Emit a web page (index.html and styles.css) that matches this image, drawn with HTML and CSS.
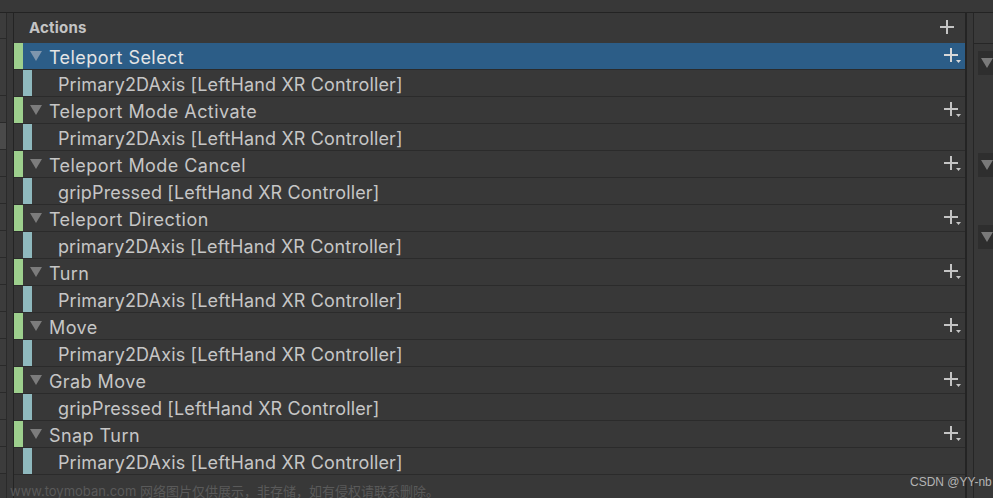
FILE: index.html
```html
<!DOCTYPE html>
<html>
<head>
<meta charset="utf-8">
<link rel="stylesheet" href="styles.css">
</head>
<body>
<div class="topstrip"></div>
<div class="window">
  <div class="leftstrip">
    <div class="lcol">
      <div class="lcell" style="height:26px"></div>
      <div class="lcell" style="height:57px"></div>
      <div class="lcell" style="height:27px"></div>
      <div class="lcell lighter" style="height:27px"></div>
      <div class="lcell" style="height:27px"></div>
      <div class="lcell" style="height:27px"></div>
      <div class="lcell" style="height:27px"></div>
      <div class="lcell" style="height:27px"></div>
      <div class="lcell" style="height:27px"></div>
      <div class="lcell" style="height:27px"></div>
      <div class="lcell" style="height:27px"></div>
      <div class="lcell" style="height:27px"></div>
      <div class="lcell" style="height:27px"></div>
      <div class="lcell" style="height:27px"></div>
      <div class="lcell" style="height:27px"></div>
      <div class="lcell" style="height:27px"></div>
    </div>
  </div>
  <div class="panel">
    <div class="header">
      <span class="title">Actions</span>
      <svg class="plus" width="14" height="14" viewBox="0 0 14 14"><path d="M7 0v14M0 7h14" stroke="#c4c4c4" stroke-width="2"/></svg>
    </div>
    <div class="list">
      <div class="row action selected"><span class="gbar"></span><span class="tri"></span><span class="name">Teleport Select</span><span class="addbtn"><svg width="18" height="16" viewBox="0 0 18 16"><path d="M7 0v14M0 7h14" stroke="#d8d8d8" stroke-width="2"/><path d="M12 12h5l-2.5 3z" fill="#d8d8d8"/></svg></span></div>
      <div class="row binding"><span class="tbar"></span><span class="bname">Primary2DAxis [LeftHand XR Controller]</span></div>
      <div class="row action"><span class="gbar"></span><span class="tri"></span><span class="name">Teleport Mode Activate</span><span class="addbtn"><svg width="18" height="16" viewBox="0 0 18 16"><path d="M7 0v14M0 7h14" stroke="#c4c4c4" stroke-width="2"/><path d="M12 12h5l-2.5 3z" fill="#c4c4c4"/></svg></span></div>
      <div class="row binding"><span class="tbar"></span><span class="bname">Primary2DAxis [LeftHand XR Controller]</span></div>
      <div class="row action"><span class="gbar"></span><span class="tri"></span><span class="name">Teleport Mode Cancel</span><span class="addbtn"><svg width="18" height="16" viewBox="0 0 18 16"><path d="M7 0v14M0 7h14" stroke="#c4c4c4" stroke-width="2"/><path d="M12 12h5l-2.5 3z" fill="#c4c4c4"/></svg></span></div>
      <div class="row binding"><span class="tbar"></span><span class="bname">gripPressed [LeftHand XR Controller]</span></div>
      <div class="row action"><span class="gbar"></span><span class="tri"></span><span class="name">Teleport Direction</span><span class="addbtn"><svg width="18" height="16" viewBox="0 0 18 16"><path d="M7 0v14M0 7h14" stroke="#c4c4c4" stroke-width="2"/><path d="M12 12h5l-2.5 3z" fill="#c4c4c4"/></svg></span></div>
      <div class="row binding"><span class="tbar"></span><span class="bname">primary2DAxis [LeftHand XR Controller]</span></div>
      <div class="row action"><span class="gbar"></span><span class="tri"></span><span class="name">Turn</span><span class="addbtn"><svg width="18" height="16" viewBox="0 0 18 16"><path d="M7 0v14M0 7h14" stroke="#c4c4c4" stroke-width="2"/><path d="M12 12h5l-2.5 3z" fill="#c4c4c4"/></svg></span></div>
      <div class="row binding"><span class="tbar"></span><span class="bname">Primary2DAxis [LeftHand XR Controller]</span></div>
      <div class="row action"><span class="gbar"></span><span class="tri"></span><span class="name">Move</span><span class="addbtn"><svg width="18" height="16" viewBox="0 0 18 16"><path d="M7 0v14M0 7h14" stroke="#c4c4c4" stroke-width="2"/><path d="M12 12h5l-2.5 3z" fill="#c4c4c4"/></svg></span></div>
      <div class="row binding"><span class="tbar"></span><span class="bname">Primary2DAxis [LeftHand XR Controller]</span></div>
      <div class="row action"><span class="gbar"></span><span class="tri"></span><span class="name">Grab Move</span><span class="addbtn"><svg width="18" height="16" viewBox="0 0 18 16"><path d="M7 0v14M0 7h14" stroke="#c4c4c4" stroke-width="2"/><path d="M12 12h5l-2.5 3z" fill="#c4c4c4"/></svg></span></div>
      <div class="row binding"><span class="tbar"></span><span class="bname">gripPressed [LeftHand XR Controller]</span></div>
      <div class="row action"><span class="gbar"></span><span class="tri"></span><span class="name">Snap Turn</span><span class="addbtn"><svg width="18" height="16" viewBox="0 0 18 16"><path d="M7 0v14M0 7h14" stroke="#c4c4c4" stroke-width="2"/><path d="M12 12h5l-2.5 3z" fill="#c4c4c4"/></svg></span></div>
      <div class="row binding"><span class="tbar"></span><span class="bname">Primary2DAxis [LeftHand XR Controller]</span></div>
    </div>
  </div>
  <div class="rightstrip">
    <div class="rtop"></div>
    <div class="rbox" style="margin-top:7px"><span class="rtri"></span></div>
    <div class="rbox" style="margin-top:78px"><span class="rtri"></span></div>
    <div class="rbox" style="margin-top:48px"><span class="rtri"></span></div>
  </div>
</div>
<div class="watermark">www.toymoban.com 网络图片仅供展示，非存储，如有侵权请联系删除。</div>
<div class="csdn">CSDN @YY-nb</div>
</body>
</html>
```
FILE: styles.css
```css
html, body {
  margin: 0;
  padding: 0;
  background: #383838;
  width: 993px;
  height: 498px;
  overflow: hidden;
  font-family: Inter, "Noto Sans", "Noto Sans CJK SC", sans-serif;
  color: #c4c4c4;
}

body { position: relative; }

.topstrip {
  height: 12px;
  background: #383838;
  border-bottom: 1px solid #232323;
}

.window {
  display: flex;
  height: 485px;
}

.leftstrip {
  width: 13px;
  display: flex;
}

.lcol {
  width: 6px;
  border-right: 1px solid #2a2a2a;
  display: flex;
  flex-direction: column;
}

.lcell {
  border-bottom: 1px solid #2a2a2a;
  background: #3c3c3c;
  box-sizing: border-box;
  flex-shrink: 0;
}

.lcell.lighter { background: #4a4a4a; }

.panel {
  width: 955px;
  border-left: 1px solid #242424;
  border-right: 2px solid #242424;
  background: #383838;
  display: flex;
  flex-direction: column;
}

.header {
  height: 30px;
  display: flex;
  align-items: center;
  justify-content: space-between;
  padding: 0 10px 0 15px;
}

.title {
  font-size: 15px;
  font-weight: 700;
  color: #c4c4c4;
  letter-spacing: 0.2px;
  margin-top: -1px;
}

.plus { margin-top: -3px; margin-right: 1px; }

.row {
  height: 26px;
  border-bottom: 1px solid #2b2b2b;
  display: flex;
  align-items: center;
  background: #383838;
}

.row.selected { background: #2c5d87; }

.gbar {
  width: 9px;
  height: 100%;
  background: #9dcf8d;
  flex-shrink: 0;
}

.tbar {
  width: 9px;
  height: 100%;
  background: #8fb9be;
  margin-left: 9px;
  flex-shrink: 0;
}

.tri {
  width: 0;
  height: 0;
  border-left: 6px solid transparent;
  border-right: 6px solid transparent;
  border-top: 10px solid #7c7c7c;
  margin-left: 7px;
}

.selected .tri { border-top-color: #7f96ad; }

.name {
  font-size: 18px;
  letter-spacing: 0.45px;
  margin-left: 7px;
  padding-top: 3px;
  color: #c6c6c6;
  flex: 1;
  white-space: nowrap;
}

.selected .name { color: #e4e4e4; }

.bname {
  font-size: 18px;
  letter-spacing: 0.15px;
  margin-left: 26px;
  padding-top: 3px;
  color: #c6c6c6;
  white-space: nowrap;
}

.addbtn {
  width: 18px;
  height: 16px;
  margin-right: 3px;
  display: flex;
}

.rightstrip {
  margin-left: 6px;
  border-left: 1px solid #262626;
  flex: 1;
  display: flex;
  flex-direction: column;
}

.rtop {
  height: 30px;
  border-bottom: 1px solid #262626;
  background: #3a3a3a;
}

.rbox {
  margin-left: 4px;
  height: 24px;
  background: #2e2e2e;
  display: flex;
  align-items: center;
  padding-left: 3px;
}

.rtri {
  width: 0;
  height: 0;
  border-left: 6px solid transparent;
  border-right: 6px solid transparent;
  border-top: 10px solid #7a7a7a;
}

.watermark {
  position: absolute;
  left: 10px;
  top: 481px;
  font-size: 13px;
  color: #5a5a5a;
  white-space: nowrap;
}

.csdn {
  position: absolute;
  left: 910px;
  top: 475px;
  font-size: 12px;
  color: #b4b4b4;
  font-family: "Liberation Sans", Arial, sans-serif;
  white-space: nowrap;
}
```
